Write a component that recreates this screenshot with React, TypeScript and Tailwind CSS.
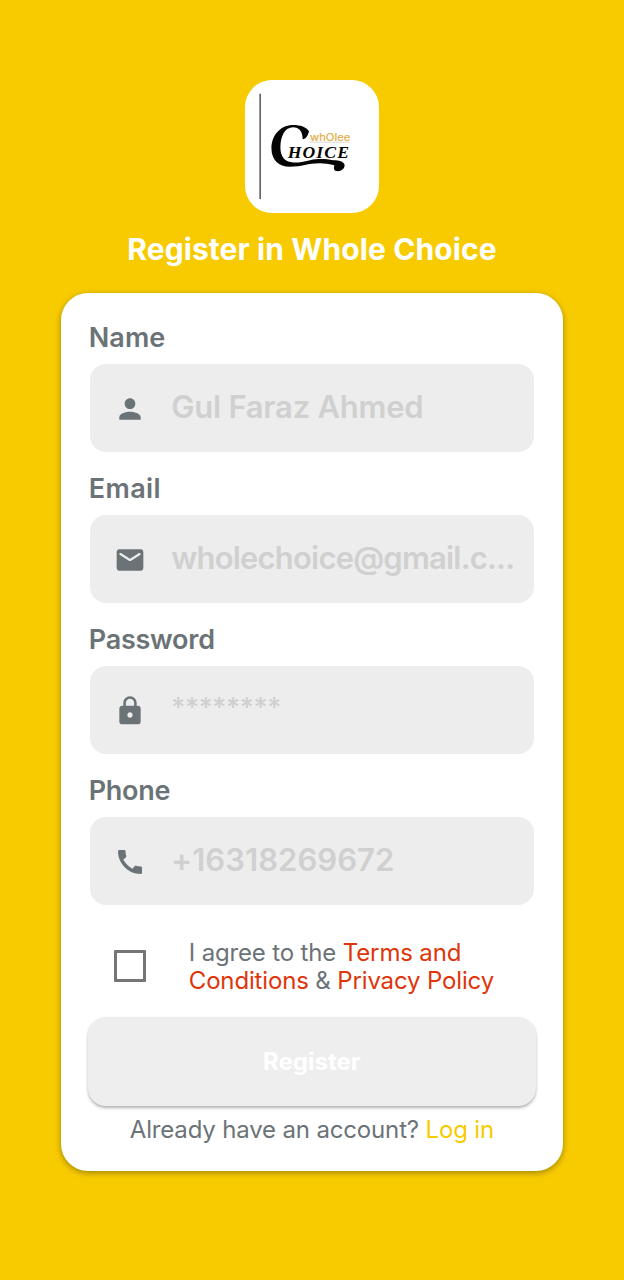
import type { ReactNode } from "react";

const icons = {
  person:
    "M12 12c2.21 0 4-1.79 4-4s-1.79-4-4-4-4 1.79-4 4 1.79 4 4 4zm0 2c-2.67 0-8 1.34-8 4v2h16v-2c0-2.66-5.33-4-8-4z",
  mail: "M20 4H4c-1.1 0-2 .9-2 2v12c0 1.1.9 2 2 2h16c1.1 0 2-.9 2-2V6c0-1.1-.9-2-2-2zm-.4 4.250l-7.070 4.420c-.32.2-.74.2-1.060 0L4.400 8.250c-.25-.16-.4-.43-.4-.72 0-.67.73-1.070 1.300-.72L12 11l6.700-4.190c.57-.35 1.300.05 1.300.72 0 .29-.15.56-.4.72z",
  lock: "M18 8h-1V6c0-2.76-2.24-5-5-5S7 3.240 7 6v2H6c-1.100 0-2 .9-2 2v10c0 1.100.9 2 2 2h12c1.100 0 2-.9 2-2V10c0-1.100-.9-2-2-2zm-6 9c-1.100 0-2-.9-2-2s.9-2 2-2 2 .9 2 2-.9 2-2 2zm3.100-9H8.900V6c0-1.710 1.390-3.100 3.100-3.100 1.710 0 3.100 1.390 3.100 3.100v2z",
  phone:
    "M20.010 15.380c-1.230 0-2.420-.2-3.530-.56-.35-.12-.74-.03-1.010.24l-1.570 1.970c-2.830-1.350-5.480-3.900-6.890-6.830l1.950-1.660c.27-.28.35-.67.24-1.020-.37-1.110-.56-2.300-.56-3.530 0-.54-.45-.99-.99-.99H4.190C3.650 3 3 3.240 3 3.990 3 13.280 10.730 21 20.010 21c.71 0 .99-.63.99-1.180v-3.450c0-.54-.45-.99-.99-.99z",
};

function Logo() {
  return (
    <svg className="block h-[133px] w-[134px]" viewBox="30 30 402 400">
      <path d="M75 71V388" stroke="#3f3f3f" strokeWidth="4" />
      <path
        d="M222 184C214 171 196 165 175 165C135 165 109 197 109 235C109 270 131 291 164 291C203 291 225 278 264 281C280 282 290 284 299 287C295 293 296 303 306 304C319 305 330 297 329 285C327 274 311 271 296 271C270 267 250 266 225 271C203 276 190 279 175 278C149 277 136 260 136 233C136 198 150 172 174 172C192 172 203 184 203 208C213 207 219 197 222 184Z"
        fill="#050505"
      />
      <path d="M224 217H345" stroke="#b9b2a5" strokeWidth="1.5" />
      <text
        x="225"
        y="212"
        textLength="121"
        lengthAdjust="spacingAndGlyphs"
        fill="#dfae45"
        stroke="#dfae45"
        strokeWidth="0.6"
        className="font-['Inter'] text-[30px]"
      >
        whOlee
      </text>
      <text
        x="158"
        y="264"
        textLength="184"
        fill="#050505"
        className="font-['Liberation_Serif'] text-[53px] font-bold italic"
      >
        HOICE
      </text>
    </svg>
  );
}

function Field({
  label,
  icon,
  labelClass,
  children,
}: {
  label: string;
  icon: keyof typeof icons;
  labelClass: string;
  children: ReactNode;
}) {
  return (
    <div className="mb-[19px]">
      <div className={"h-[34px] pt-px text-[27px] leading-[34px] font-semibold text-[#6b7377] " + labelClass}>
        {label}
      </div>
      <div className="mt-[10px] ml-px flex h-[88px] w-[444px] items-center rounded-2xl bg-[#ededed] pl-6">
        <svg className="mt-px h-8 w-8 shrink-0 fill-[#6b7377]" viewBox="0 0 24 24">
          <path d={icons[icon]} />
        </svg>
        <div className="-mt-[2px] ml-[25.5px] h-10 text-[31px] leading-10 font-semibold whitespace-nowrap text-[#d0d0d0]">
          {children}
        </div>
      </div>
    </div>
  );
}

export default function App() {
  return (
    <main className="flex h-[1280px] w-[624px] flex-col items-center bg-[#f8cb00] pt-20 font-['Inter',sans-serif]">
      <div className="h-[133px] w-[134px] overflow-hidden rounded-[27px] bg-white">
        <Logo />
      </div>
      <h1 className="mt-4 h-10 text-[30px] leading-10 font-bold tracking-[0.1px] whitespace-nowrap text-white">
        Register in Whole Choice
      </h1>
      <section className="mt-6 h-[877.5px] w-[502.5px] rounded-[27px] bg-white pt-[27px] pl-7 shadow-[0_2px_6px_rgba(0,0,0,0.35)]">
        <Field label="Name" icon="person" labelClass="tracking-[0.1px]">
          <span className="tracking-[-0.25px]">Gul Faraz Ahmed</span>
        </Field>
        <Field label="Email" icon="mail" labelClass="tracking-[0.4px]">
          <span className="tracking-[-0.8px]">wholechoice@gmail.c...</span>
        </Field>
        <Field label="Password" icon="lock" labelClass="tracking-[-0.25px]">
          <span className="block text-[27px] leading-[37px] font-medium tracking-[-0.35px]">********</span>
        </Field>
        <Field label="Phone" icon="phone" labelClass="tracking-[-0.3px]">
          <span className="tracking-[0.05px]">+16318269672</span>
        </Field>
        <div className="mt-[33px] flex h-14 items-center">
          <div className="ml-[25px] h-8 w-8 rounded-[1px] border-[3px] border-[#757575]" />
          <div className="ml-[43px] pt-[2px] text-2xl leading-7 tracking-[-0.15px] whitespace-nowrap text-[#6b7377]">
            <div>
              I agree to the <span className="text-[#de350b]">Terms and</span>
            </div>
            <div>
              <span className="text-[#de350b]">Conditions</span> &amp;{" "}
              <span className="text-[#de350b]">Privacy Policy</span>
            </div>
          </div>
        </div>
        <button className="mt-[23px] -ml-px block h-[89px] w-[448px] rounded-[18px] bg-[#eeeeee] text-2xl font-bold text-white shadow-[0_2px_3px_rgba(0,0,0,0.3)]">
          Register
        </button>
        <div className="mt-[9px] ml-[41px] h-[30px] text-2xl leading-[30px] tracking-[-0.16px] whitespace-nowrap text-[#6b7377]">
          Already have an account? <span className="text-[#f8cb00]">Log in</span>
        </div>
      </section>
    </main>
  );
}
